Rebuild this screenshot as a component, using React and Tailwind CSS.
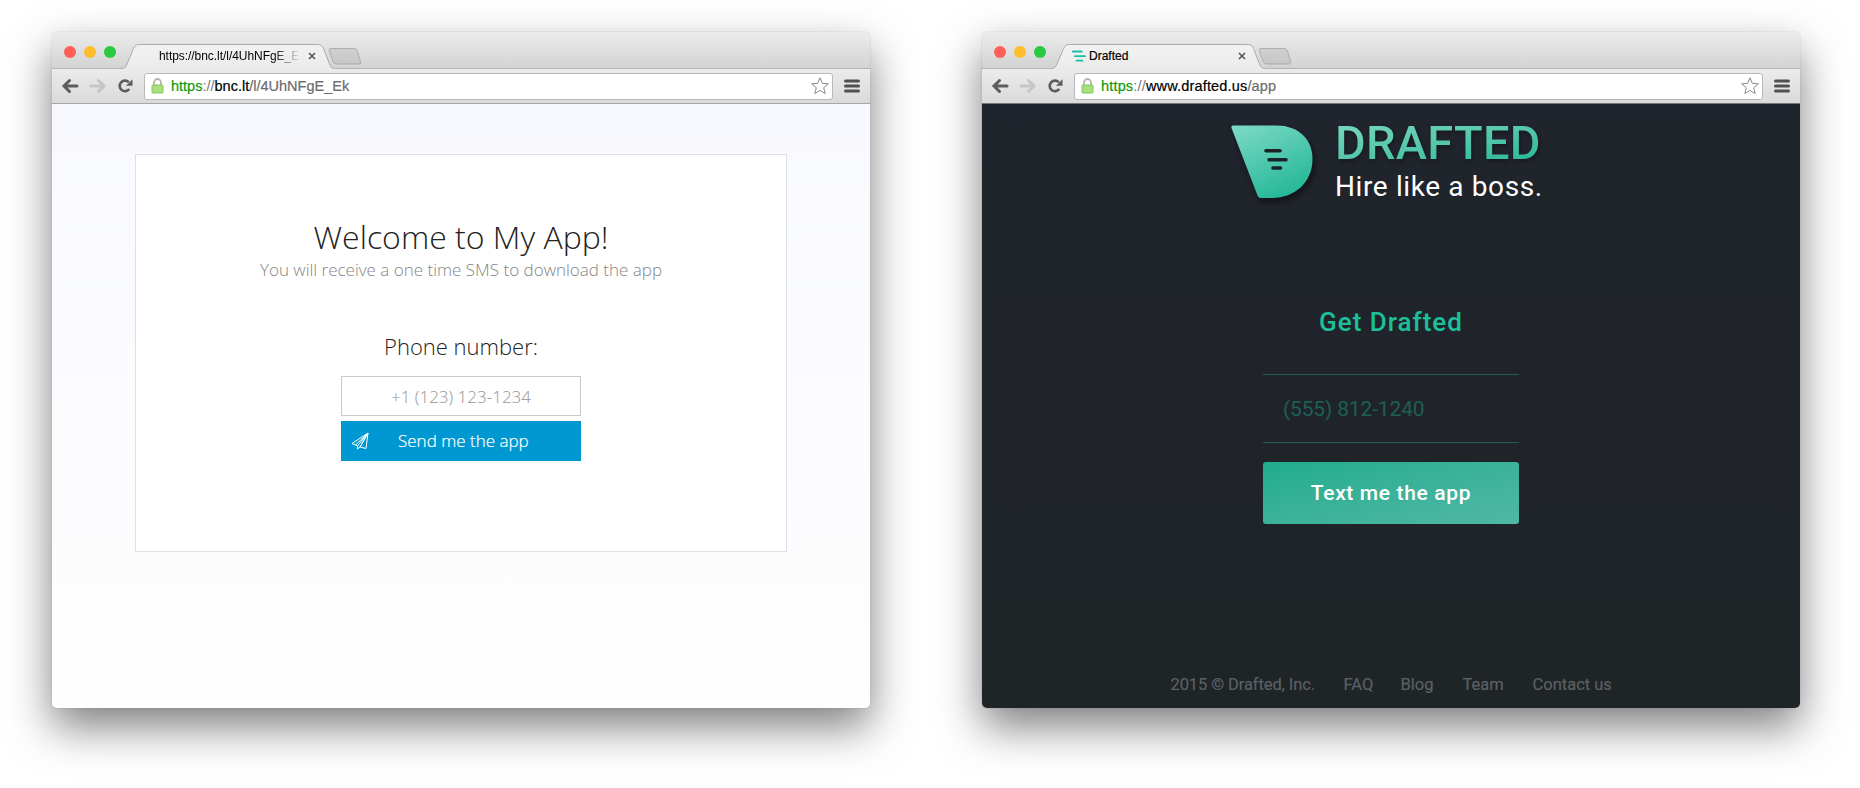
import React from "react";

function TitleBar({ title, favicon, titleClass }) {
  return (
    <div className="relative h-9 w-full">
      <svg className="absolute left-0 top-0" width="320" height="37" viewBox="0 0 320 37">
        <defs>
          <linearGradient id="tabfill" x1="0" y1="0" x2="0" y2="1">
            <stop offset="0" stopColor="#f2f2f2" />
            <stop offset="1" stopColor="#ebebeb" />
          </linearGradient>
          <linearGradient id="newtab" x1="0" y1="0" x2="0" y2="1">
            <stop offset="0" stopColor="#d0d0d0" />
            <stop offset="1" stopColor="#c6c6c6" />
          </linearGradient>
        </defs>
        <path d="M279 16.500h23q2.500 0 3.400 2.500l3.200 10.500q.8 2.500-1.600 2.500h-22.500q-2.500 0-3.300-2.200l-3.800-10.800q-.8-2.500 1.600-2.500z" fill="url(#newtab)" stroke="#adadad" />
        <path d="M70 36.500C73 36 73.500 35 75 32L81.500 16.500C83 13.500 84.500 12.500 87.500 12.500H265.500C268.500 12.500 270 13.500 271.500 16.500L277.500 32C279 35 279.500 36 282.500 36.500V37H70z" fill="url(#tabfill)" />
        <path d="M70 36.500C73 36 73.500 35 75 32L81.500 16.500C83 13.500 84.500 12.500 87.500 12.500H265.500C268.500 12.500 270 13.500 271.500 16.500L277.500 32C279 35 279.500 36 282.500 36.500" fill="none" stroke="#aaa" />
      </svg>
      <div className="relative flex h-full items-center pl-3 pt-[3px]">
        <span className="h-3 w-3 rounded-full bg-[#ff5f57]" />
        <span className="ml-2 h-3 w-3 rounded-full bg-[#ffbd2e]" />
        <span className="ml-2 h-3 w-3 rounded-full bg-[#28ca42]" />
        <span className="ml-[26px] flex h-4 w-[17px] items-center">{favicon}</span>
        <span className="mt-2 w-[142px] whitespace-nowrap">
          <span className={titleClass}>{title}</span>
        </span>
        <svg className="ml-[7px] mt-2" width="8" height="8" viewBox="0 0 8 8">
          <path d="M1 1l6 6M7 1L1 7" stroke="#555" strokeWidth="1.600" />
        </svg>
      </div>
    </div>
  );
}

function Toolbar({ host, path, urlClass }) {
  return (
    <div className="flex h-[35px] items-center border-t border-[#b4b4b4] bg-gradient-to-b from-[#ebebeb] to-[#dadada] pl-[9px]">
      <svg width="74" height="16" viewBox="0 0 74 16" fill="none">
        <path d="M8.500 2.500L3 8l5.500 5.500M3.500 8H16" stroke="#5c5c5c" strokeWidth="3" strokeLinecap="round" />
        <path d="M37.500 2.500L43 8l-5.500 5.500M42.500 8H30" stroke="#c6c6c6" strokeWidth="3" strokeLinecap="round" />
        <path d="M67.800 4.200A5.300 5.300 0 1 0 68.300 11" stroke="#5c5c5c" strokeWidth="2.600" />
        <path d="M71.500 1.200v6.600h-6.600z" fill="#5c5c5c" />
      </svg>
      <div className="ml-[9px] flex h-[27px] w-[689px] items-center rounded-[3px] border border-[#b9b9b9] bg-white">
        <svg className="ml-[6px] shrink-0" width="13" height="16" viewBox="0 0 13 16">
          <path d="M3 8V4.500a3.500 3.500 0 0 1 7 0V8" fill="none" stroke="#b4b4b4" strokeWidth="1.800" />
          <rect x="1" y="7" width="11" height="8" rx=".8" fill="#a8e07f" stroke="#86c75c" />
        </svg>
        <div className={urlClass}>
          <span className="text-[#0b9a0b] [-webkit-text-stroke:0.2px]">https</span>
          <span className="text-[#777]">://</span>
          <span className="text-black [-webkit-text-stroke:0.2px]">{host}</span>
          <span className="text-[#6c6c6c] [-webkit-text-stroke:0.2px]">{path}</span>
        </div>
        <svg className="ml-auto mr-[3px]" width="18" height="18" viewBox="0 0 18 18">
          <path d="M9 .8l2.300 5.500 6 .5-4.600 3.900 1.500 5.900L9 13.400l-5.200 3.200 1.500-5.900L.7 6.800l6-.5z" fill="#fff" stroke="#8a8a8a" strokeLinejoin="round" />
        </svg>
      </div>
      <svg className="ml-[11px]" width="16" height="14" viewBox="0 0 16 14">
        <path d="M1.500 2h13M1.500 7h13M1.500 12h13" stroke="#505050" strokeWidth="3" strokeLinecap="round" />
      </svg>
    </div>
  );
}

function BrowserWindow({ chrome, bodyClass, children }) {
  return (
    <section className="flex h-[676px] w-[818px] flex-col overflow-hidden rounded-[5px] bg-gradient-to-b from-[#ececec] to-[#d2d2d2] bg-[length:100%_37px] bg-no-repeat font-['Liberation_Sans',sans-serif] shadow-[0_0_1px_0px_rgba(0,0,0,0.4),0_19px_44px_rgba(0,0,0,0.5)]">
      {chrome}
      <div className={bodyClass}>{children}</div>
    </section>
  );
}

function PaperPlane() {
  return (
    <svg width="18" height="18" viewBox="0 0 18 18" fill="none" stroke="#fff" strokeWidth="1" strokeLinejoin="round">
      <path d="M17 1L1 11.500l3.500 1.500zM17 1L6.500 14v3l2.500-2zM17 1L9 15l6 1.500zM4.500 13l2 1" />
    </svg>
  );
}

function Favicon() {
  return (
    <svg className="mt-2" width="14" height="12" viewBox="0 0 14 12">
      <path d="M.8 1.500h9M3 6.200h10M4.500 10.700h6" stroke="#17bfa3" strokeWidth="1.800" strokeLinecap="round" />
    </svg>
  );
}

function DraftedMark() {
  return (
    <svg className="overflow-visible drop-shadow-[2px_4px_3px_rgba(0,0,0,0.5)]" width="82" height="74" viewBox="0 0 82 74">
      <defs>
        <linearGradient id="mark" x1="0.1" y1="0" x2="0.6" y2="1">
          <stop offset="0" stopColor="#7bd9c4" />
          <stop offset="1" stopColor="#26b898" />
        </linearGradient>
      </defs>
      <path d="M2 .5H46C67 .5 81.500 14 81.500 34C81.500 57 64 73 41 73H29.500Q27.500 73 26.700 71L.5 3Q0 .5 2 .5z" fill="url(#mark)" />
      <path d="M35 25.800h14M38 34.800h17M42 43h7.500" stroke="#1a2328" strokeWidth="3.600" strokeLinecap="round" />
    </svg>
  );
}

export default function App() {
  return (
    <main className="flex h-[788px] w-[1860px] gap-28 overflow-hidden bg-white pl-[52px] pt-8">
      <BrowserWindow
        chrome={
          <>
            <TitleBar
              title="https://bnc.lt/l/4UhNFgE_E"
              titleClass="block bg-gradient-to-r from-black from-80% to-transparent to-100% bg-clip-text text-[12px] leading-4 tracking-[-0.05px] text-transparent"
            />
            <Toolbar host="bnc.lt" path="/l/4UhNFgE_Ek" urlClass="ml-[7px] text-[14.5px] leading-5" />
          </>
        }
        bodyClass="flex flex-1 flex-col items-center border-t border-[#a6a6a6] bg-gradient-to-b from-[#f8f9fe] to-[#fefefe] pt-[50px] font-['Open_Sans',sans-serif] font-light"
      >
        <div className="flex h-[398px] w-[652px] flex-col items-center border border-[#dfe1e8] bg-white pt-[60px]">
          <h1 className="text-[32px] leading-[44px] text-[#222]">Welcome to My App!</h1>
          <p className="-mt-px text-[17px] leading-6 text-[#858585]">You will receive a one time SMS to download the app</p>
          <label className="mt-[48px] text-[22px] leading-8 text-[#222]">Phone number:</label>
          <div className="mt-[14px] flex h-10 w-60 items-center justify-center border border-[#c9c9c9] pt-0.5 text-[17px] text-[#949494]">+1 (123) 123-1234</div>
          <button className="mt-[5px] flex h-10 w-60 items-center bg-[#0098d3] pl-[10px] text-[17px] text-white">
            <PaperPlane />
            <span className="ml-[29px] [-webkit-text-stroke:0.2px]">Send me the app</span>
          </button>
        </div>
      </BrowserWindow>

      <BrowserWindow
        chrome={
          <>
            <TitleBar title="Drafted" favicon={<Favicon />} titleClass="block text-[12px] leading-4 text-black [-webkit-text-stroke:0.2px]" />
            <Toolbar host="www.drafted.us" path="/app" urlClass="ml-[7px] text-[14.5px] leading-5 tracking-[0.17px]" />
          </>
        }
        bodyClass="flex flex-1 flex-col items-center border-t border-[#777] bg-gradient-to-b from-[#20242c] to-[#1f2427] pt-[21px] font-['Roboto',sans-serif]"
      >
        <div className="flex h-[82px] w-[320px]">
          <DraftedMark />
          <div className="ml-[22px] flex flex-col whitespace-nowrap">
            <div className="bg-gradient-to-br from-[#76d6c0] to-[#24b997] bg-clip-text text-[47px] font-medium leading-[36px] tracking-[0.3px] text-transparent drop-shadow-[1px_2px_2px_rgba(0,0,0,0.35)]">DRAFTED</div>
            <div className="mt-[9px] text-[28px] leading-[34px] tracking-[0.62px] text-white">Hire like a boss.</div>
          </div>
        </div>
        <h2 className="mt-[99px] text-[26px] font-medium leading-8 tracking-[1px] text-[#1bc09b]">Get Drafted</h2>
        <div className="mt-[36px] flex h-[69px] w-64 items-center border-y border-[#1c5f54] pl-5 pt-[3px] text-[21px] tracking-[-0.15px] text-[#1d5f55]">(555) 812-1240</div>
        <button className="mt-[19px] h-[62px] w-64 rounded-[3px] bg-gradient-to-br from-[#1fac8e] to-[#4fb8a5] pt-0.5 text-[21px] font-medium tracking-[0.65px] text-white">Text me the app</button>
        <footer className="mt-[149px] flex whitespace-nowrap text-[16.5px] leading-6 text-[#5c6063] [-webkit-text-stroke:0.2px]">
          <span className="w-[173px] tracking-[-0.1px]">2015 © Drafted, Inc.</span>
          <span className="w-[57px]">FAQ</span>
          <span className="w-[62px]">Blog</span>
          <span className="w-[70px]">Team</span>
          <span className="w-[79px]">Contact us</span>
        </footer>
      </BrowserWindow>
    </main>
  );
}
